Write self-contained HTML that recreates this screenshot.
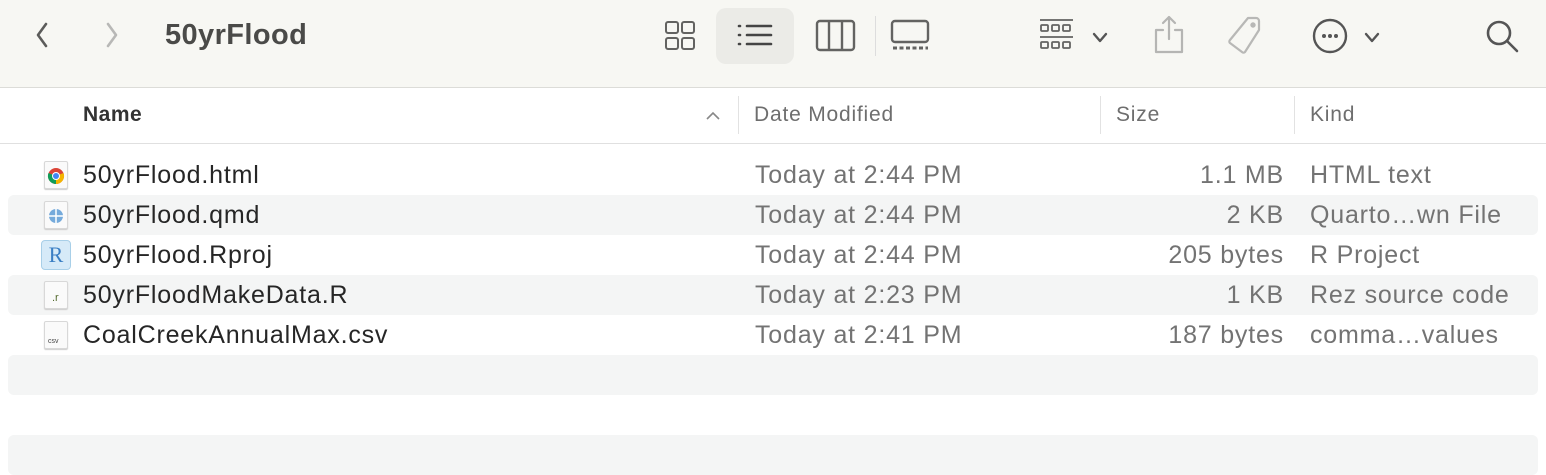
<!DOCTYPE html>
<html><head><style>
*{margin:0;padding:0;box-sizing:border-box}
body{width:1546px;height:458px;background:#fff;font-family:"Liberation Sans",Arial,sans-serif;position:relative;overflow:hidden}
.tb{position:absolute;left:0;top:0;width:1546px;height:88px;background:#f7f7f3;border-bottom:1px solid #dcdcd8}
.title{position:absolute;left:165px;top:19px;font-size:29px;font-weight:bold;color:#4a4a48;letter-spacing:0.4px}
.sel{position:absolute;left:716px;top:8px;width:78px;height:56px;background:#ebebe7;border-radius:10px}
svg{position:absolute}
.hdr{position:absolute;top:89px;left:0;width:1546px;height:55px;border-bottom:1px solid #e0e0e0}
.hdr span{position:absolute;top:14px;font-size:21px;color:#6e6e6e;letter-spacing:0.8px}
.sep{position:absolute;top:7px;width:1px;height:38px;background:#e2e2e2}
.stripe{position:absolute;left:8px;width:1530px;height:40px;background:#f4f5f5;border-radius:6px}
.row{position:absolute;left:0;width:1546px;height:40px;font-size:25px;color:#262626;letter-spacing:0.8px}
.row span{position:absolute;top:6px;white-space:nowrap}
.n{left:83px}.d{left:755px;color:#737373}.s{right:262px;color:#737373;text-align:right}.k{left:1310px;color:#737373}
.ic{position:absolute;left:44px;top:6px;width:24px;height:28px;background:#fafafa;border:1px solid #d8d8d8;border-radius:2px;box-shadow:0 1px 1px #ccc;letter-spacing:0}
</style></head><body>
<div class="tb">
<svg width="40" height="40" style="left:28px;top:20px"><path d="M18 4 L10 15 L18 26" fill="none" stroke="#5c5c5a" stroke-width="2.6" stroke-linecap="round" stroke-linejoin="round"/></svg>
<svg width="40" height="40" style="left:102px;top:20px"><path d="M6 4 L14 15 L6 26" fill="none" stroke="#b8b8b6" stroke-width="2.6" stroke-linecap="round" stroke-linejoin="round"/></svg>
<div class="title">50yrFlood</div>
<div class="sel"></div>
<svg width="40" height="40" style="left:662px;top:18px" fill="none" stroke="#636361" stroke-width="2"><rect x="4" y="4" width="12" height="11" rx="2"/><rect x="20" y="4" width="12" height="11" rx="2"/><rect x="4" y="20" width="12" height="11" rx="2"/><rect x="20" y="20" width="12" height="11" rx="2"/></svg>
<svg width="40" height="40" style="left:735px;top:17px" stroke="#444" stroke-width="2.6" stroke-linecap="round"><path d="M4 9h1M4 18h1M4 27h1"/><path d="M12 9h24M12 18h24M12 27h24"/></svg>
<svg width="44" height="40" style="left:814px;top:17px" fill="none" stroke="#636361" stroke-width="2.4"><rect x="3" y="4" width="37" height="29" rx="3"/><path d="M15 4v29M28 4v29"/></svg>
<div style="position:absolute;left:875px;top:16px;width:1px;height:40px;background:#ddd"></div>
<svg width="44" height="40" style="left:888px;top:17px" fill="none" stroke="#636361" stroke-width="2.4"><rect x="4" y="4" width="36" height="21" rx="3"/><path d="M5 31h35" stroke-dasharray="4 2.5" stroke-width="3"/></svg>
<svg width="44" height="40" style="left:1036px;top:16px" fill="none" stroke="#636361" stroke-width="1.8"><path d="M4 4h33M4 21h33"/><rect x="5" y="9" width="7" height="6" rx="1"/><rect x="16" y="9" width="7" height="6" rx="1"/><rect x="27" y="9" width="7" height="6" rx="1"/><rect x="5" y="26" width="7" height="6" rx="1"/><rect x="16" y="26" width="7" height="6" rx="1"/><rect x="27" y="26" width="7" height="6" rx="1"/></svg>
<svg width="20" height="20" style="left:1091px;top:28px"><path d="M3 6l6 7 6-7" fill="none" stroke="#555" stroke-width="2.4" stroke-linecap="round" stroke-linejoin="round"/></svg>
<svg width="40" height="44" style="left:1150px;top:13px" fill="none" stroke="#b5b5b3" stroke-width="2.2" stroke-linecap="round" stroke-linejoin="round"><path d="M19 4v22M13 10l6-6 6 6"/><path d="M13 17h-7v22h26v-22h-7"/></svg>
<svg width="44" height="44" style="left:1226px;top:13px" fill="none" stroke="#b8b8b6" stroke-width="2.2" stroke-linejoin="round"><path d="M22 5h8a3 3 0 0 1 3 3v9l-14 22a2 2 0 0 1-3 0L4 30a2 2 0 0 1 0-3z"/><circle cx="27" cy="12" r="1.6" fill="#b8b8b6"/></svg>
<svg width="40" height="40" style="left:1311px;top:17px"><circle cx="19" cy="19" r="16" fill="none" stroke="#555" stroke-width="2.4"/><circle cx="13" cy="19" r="2" fill="#555"/><circle cx="19" cy="19" r="2" fill="#555"/><circle cx="25" cy="19" r="2" fill="#555"/></svg>
<svg width="20" height="20" style="left:1363px;top:28px"><path d="M3 6l6 7 6-7" fill="none" stroke="#555" stroke-width="2.4" stroke-linecap="round" stroke-linejoin="round"/></svg>
<svg width="40" height="40" style="left:1484px;top:18px" fill="none" stroke="#555" stroke-width="2.6" stroke-linecap="round"><circle cx="15" cy="15" r="11"/><path d="M23 23l10 10"/></svg>
</div>
<div class="hdr">
<span style="left:83px;font-weight:bold;color:#333;letter-spacing:0.5px">Name</span>
<svg width="20" height="20" style="left:704px;top:18px"><path d="M3 12l6-6 6 6" fill="none" stroke="#888" stroke-width="1.6"/></svg>
<div class="sep" style="left:738px"></div><span style="left:754px">Date Modified</span>
<div class="sep" style="left:1100px"></div><span style="left:1116px">Size</span>
<div class="sep" style="left:1294px"></div><span style="left:1310px">Kind</span>
</div>
<div class="stripe" style="top:195px"></div>
<div class="stripe" style="top:275px"></div>
<div class="stripe" style="top:355px"></div>
<div class="stripe" style="top:435px"></div>
<div class="row" style="top:155px"><div class="ic"><svg width="22" height="22" style="left:0;top:3px"><circle cx="11" cy="11" r="8" fill="#db4437"/><path d="M11 11L3.5 8A8 8 0 0 0 11 19z" fill="#0f9d58"/><path d="M11 11L11 19A8 8 0 0 0 18.5 8z" fill="#f4b400"/><circle cx="11" cy="11" r="4" fill="#fff"/><circle cx="11" cy="11" r="3" fill="#4285f4"/></svg></div><span class="n">50yrFlood.html</span><span class="d">Today at 2:44 PM</span><span class="s">1.1 MB</span><span class="k">HTML text</span></div>
<div class="row" style="top:195px"><div class="ic"><svg width="22" height="22" style="left:0;top:3px"><circle cx="11" cy="11" r="7" fill="#75aadb"/><path d="M11 4v14M4 11h14" stroke="#fff" stroke-width="1.5"/></svg></div><span class="n">50yrFlood.qmd</span><span class="d">Today at 2:44 PM</span><span class="s">2 KB</span><span class="k">Quarto…wn File</span></div>
<div class="row" style="top:235px"><div style="position:absolute;left:41px;top:5px;width:30px;height:30px;background:#d6eaf8;border:1px solid #a8cfe8;border-radius:4px;color:#3b7fc4;font:22px 'Liberation Serif',serif;text-align:center;line-height:28px;letter-spacing:0">R</div><span class="n">50yrFlood.Rproj</span><span class="d">Today at 2:44 PM</span><span class="s">205 bytes</span><span class="k">R Project</span></div>
<div class="row" style="top:275px"><div class="ic"><span style="position:absolute;left:7px;top:10px;font-size:11px;color:#556b2f">.r</span></div><span class="n">50yrFloodMakeData.R</span><span class="d">Today at 2:23 PM</span><span class="s">1 KB</span><span class="k">Rez source code</span></div>
<div class="row" style="top:315px"><div class="ic"><span style="position:absolute;left:3px;top:16px;font-size:7px;color:#444">csv</span></div><span class="n">CoalCreekAnnualMax.csv</span><span class="d">Today at 2:41 PM</span><span class="s">187 bytes</span><span class="k">comma…values</span></div>
</body></html>
